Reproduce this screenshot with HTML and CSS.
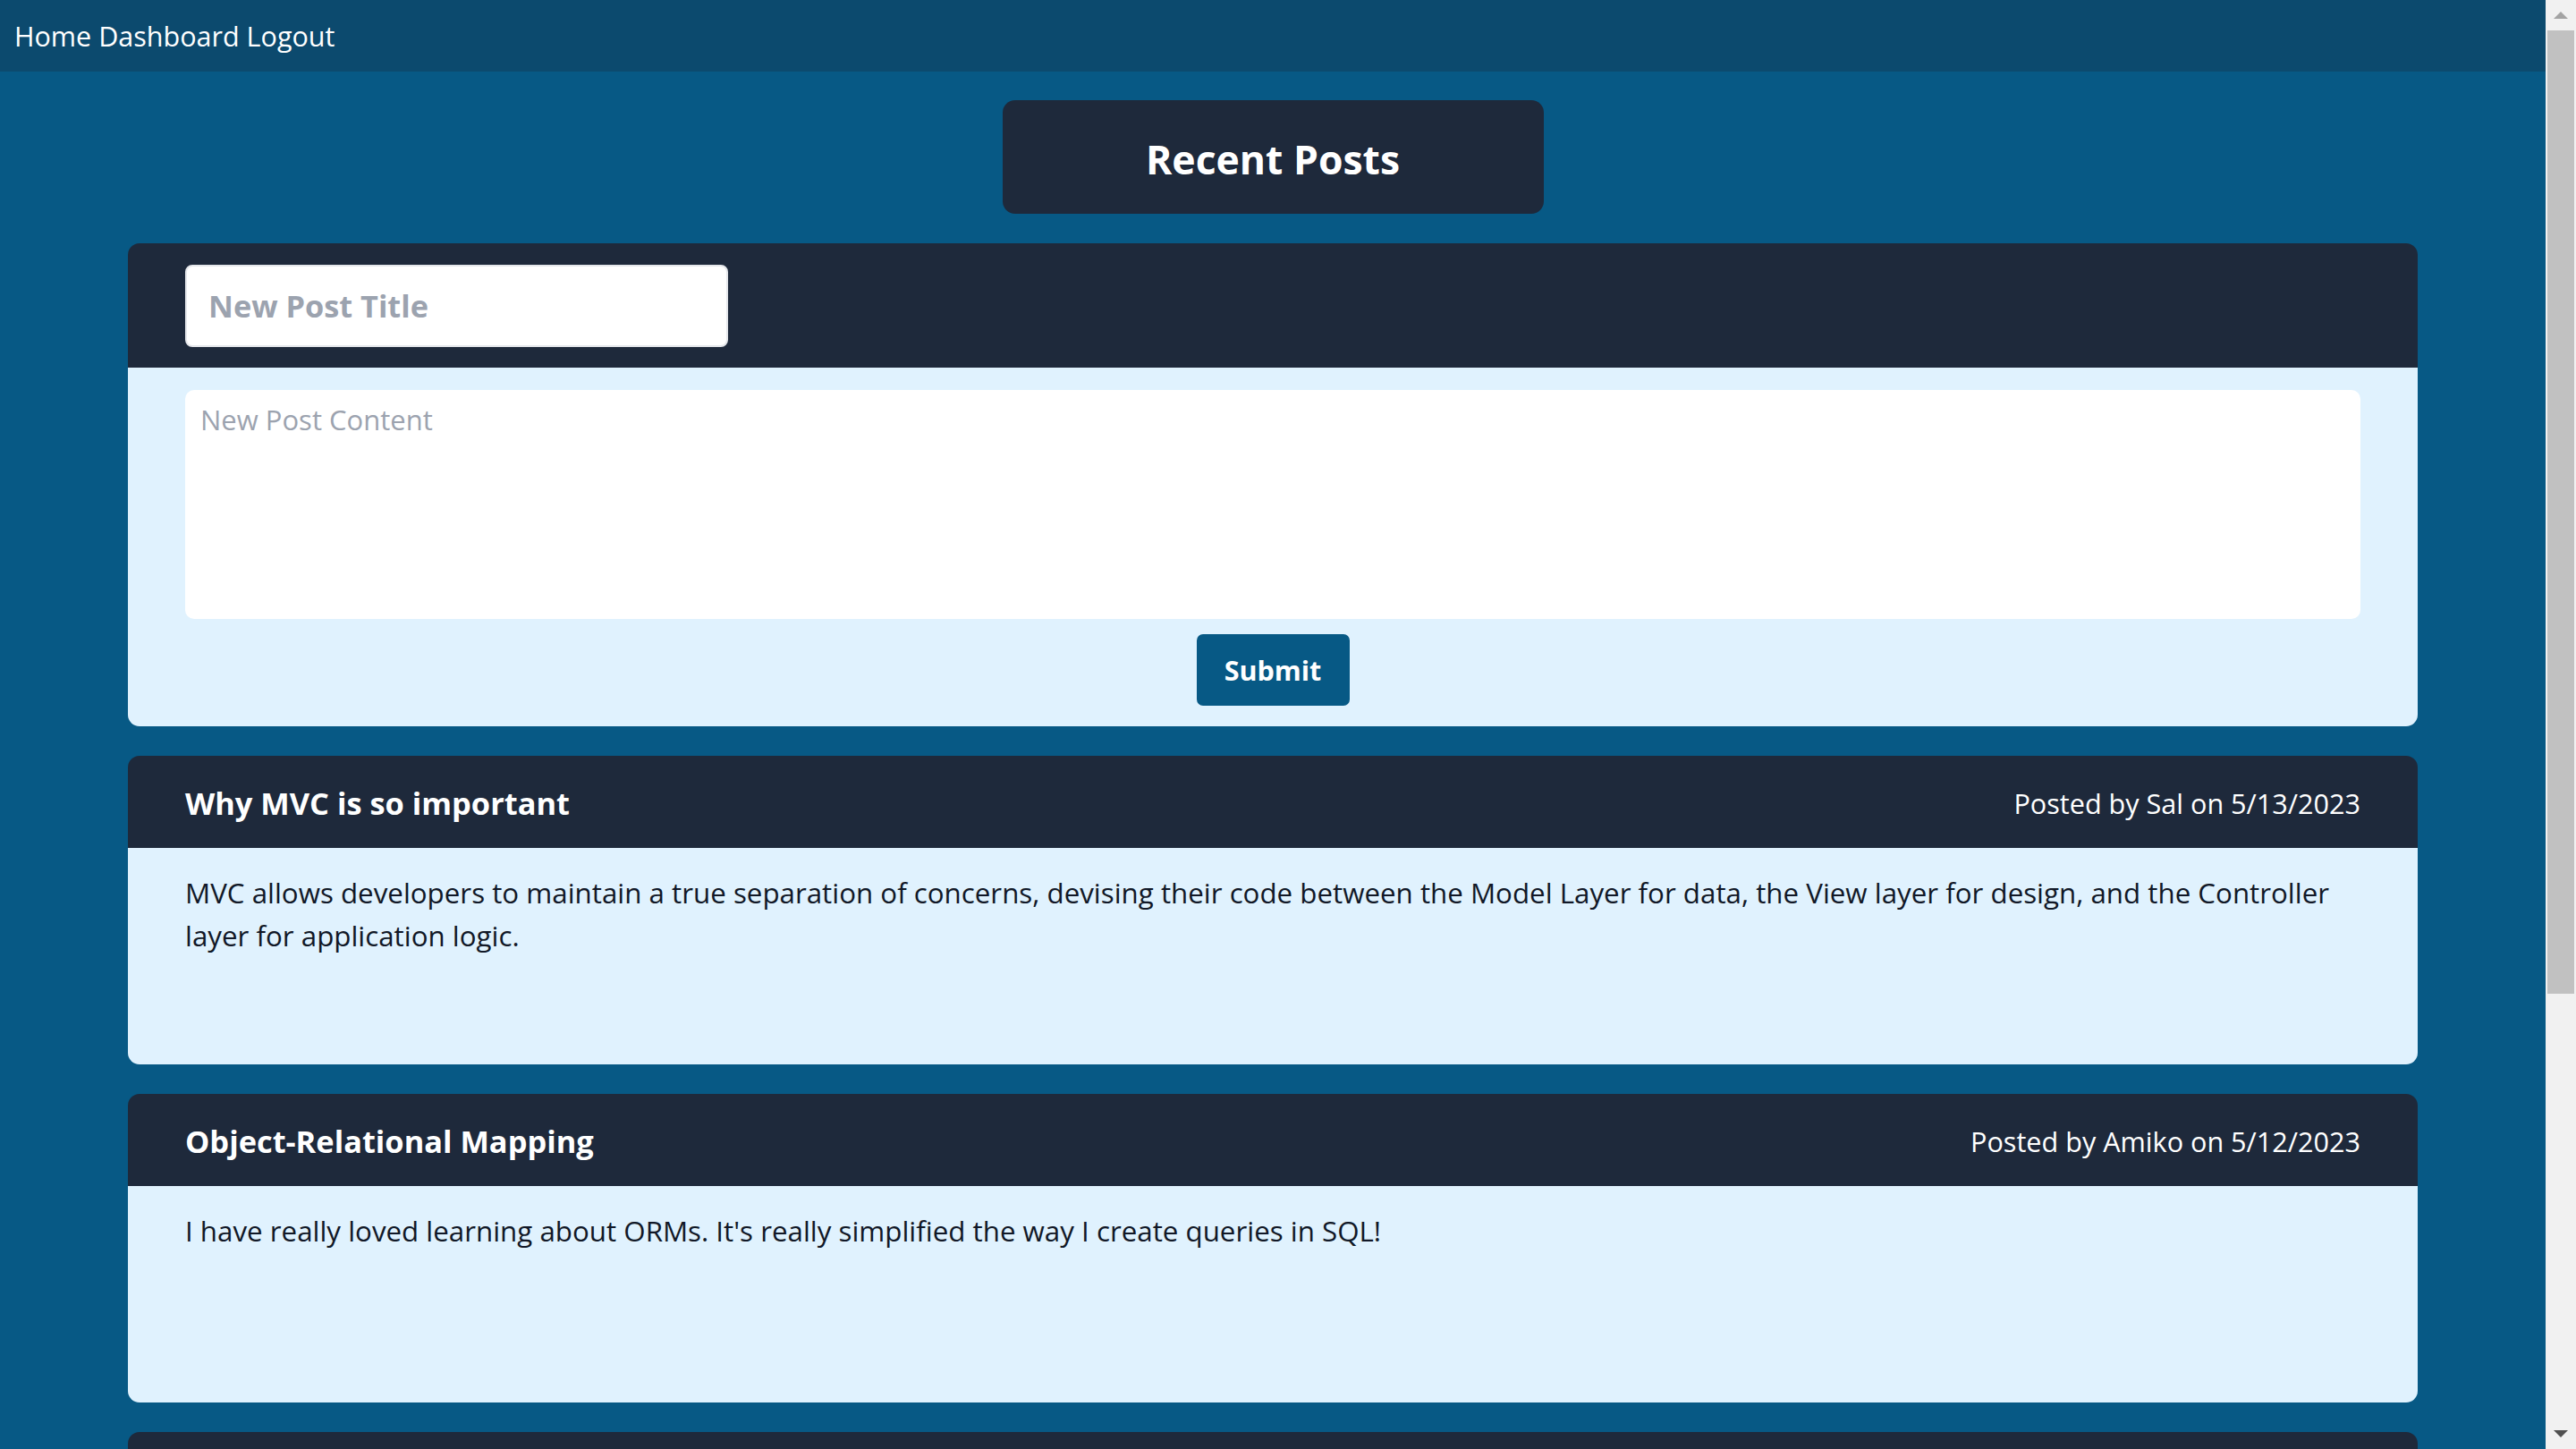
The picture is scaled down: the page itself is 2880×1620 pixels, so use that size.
FILE: index.html
```html
<!DOCTYPE html>
<html lang="en">
<head>
<meta charset="utf-8">
<title>Tech Blog</title>
<link rel="stylesheet" href="styles.css">
</head>
<body>
<div class="page">
  <div class="viewport">
    <nav class="nav">
      <a class="nav-link" href="#">Home</a>
      <a class="nav-link" href="#">Dashboard</a>
      <a class="nav-link" href="#">Logout</a>
    </nav>
    <main class="main">
      <h1 class="page-title">Recent Posts</h1>

      <form class="card">
        <div class="card-head">
          <input class="title-input" type="text" placeholder="New Post Title">
        </div>
        <div class="form-body">
          <textarea class="content-input" placeholder="New Post Content"></textarea>
          <button class="submit-btn" type="button">Submit</button>
        </div>
      </form>

      <article class="card">
        <header class="card-head post-head">
          <h2 class="post-title">Why MVC is so important</h2>
          <span class="post-meta">Posted by Sal on 5/13/2023</span>
        </header>
        <div class="post-body">
          <p class="post-text">MVC allows developers to maintain a true separation of concerns, devising their code between the Model Layer for data, the View layer for design, and the Controller layer for application logic.</p>
        </div>
      </article>

      <article class="card">
        <header class="card-head post-head">
          <h2 class="post-title">Object-Relational Mapping</h2>
          <span class="post-meta">Posted by Amiko on 5/12/2023</span>
        </header>
        <div class="post-body">
          <p class="post-text">I have really loved learning about ORMs. It's really simplified the way I create queries in SQL!</p>
        </div>
      </article>

      <article class="card">
        <div class="card-head post-head"></div>
      </article>
    </main>
  </div>
  <div class="scrollbar" aria-hidden="true">
    <div class="sb-btn">
      <svg class="sb-arrow" width="16" height="8" viewBox="0 0 16 8"><polygon points="0,8 8,0 16,8" fill="#a3a3a3"/></svg>
    </div>
    <div class="sb-track">
      <div class="sb-thumb"></div>
    </div>
    <div class="sb-btn sb-btn-down">
      <svg class="sb-arrow" width="16" height="8" viewBox="0 0 16 8"><polygon points="0,0 16,0 8,8" fill="#505050"/></svg>
    </div>
  </div>
</div>
</body>
</html>
```

FILE: styles.css
```css
html, body {
  margin: 0;
  padding: 0;
  height: 100%;
  overflow: hidden;
}

body {
  font-family: "Open Sans", "Noto Sans", sans-serif;
  background: #075985;
  color: #111827;
}

.page {
  display: flex;
  height: 1620px;
}

.viewport {
  flex: 1;
  min-width: 0;
  overflow: hidden;
  display: flex;
  flex-direction: column;
}

.nav {
  height: 80px;
  flex: none;
  background: #0c4a6e;
  display: flex;
  align-items: center;
  gap: 8px;
  padding-left: 16px;
}

.nav-link {
  color: #ffffff;
  text-decoration: none;
  font-size: 30.5px;
}

.main {
  display: flex;
  flex-direction: column;
  align-items: center;
  gap: 33px;
  padding-top: 32px;
}

.page-title {
  margin: 0;
  width: 605px;
  height: 127px;
  box-sizing: border-box;
  padding-top: 3px;
  background: #1e293b;
  border-radius: 14px;
  color: #ffffff;
  font-size: 44.5px;
  font-weight: 700;
  display: flex;
  align-items: center;
  justify-content: center;
}

.card {
  margin: 0;
  width: 2560px;
  border-radius: 13px;
  overflow: hidden;
  flex: none;
}

.card-head {
  background: #1e293b;
  height: 139px;
  box-sizing: border-box;
  padding: 0 64px;
  display: flex;
  align-items: center;
}

.title-input {
  width: 607px;
  height: 92px;
  box-sizing: border-box;
  border: 2px solid #e5e7eb;
  border-radius: 8px;
  padding: 0 24px;
  font-family: inherit;
  font-size: 34.3px;
  font-weight: 700;
  color: #111827;
  background: #ffffff;
  outline: none;
}

.title-input::placeholder {
  color: #9ca3af;
}

.form-body {
  background: #e0f2fe;
  padding: 25px 64px 23px;
  display: flex;
  flex-direction: column;
  align-items: center;
  gap: 17px;
}

.content-input {
  width: 100%;
  height: 256px;
  box-sizing: border-box;
  border: none;
  border-radius: 10px;
  padding: 9px 17px;
  font-family: inherit;
  font-size: 31px;
  line-height: 48px;
  resize: none;
  background: #ffffff;
  outline: none;
  display: block;
}

.content-input::placeholder {
  color: #9ca3af;
}

.submit-btn {
  width: 171px;
  height: 80px;
  border: none;
  border-radius: 7px;
  background: #075985;
  color: #ffffff;
  font-family: inherit;
  font-size: 30.5px;
  font-weight: 700;
  padding: 0;
}

.post-head {
  height: 103px;
  justify-content: space-between;
}

.post-title {
  margin: 0;
  color: #ffffff;
  font-size: 34.4px;
  font-weight: 700;
  padding-top: 2px;
}

.post-meta {
  color: #ffffff;
  font-size: 30.6px;
  padding-top: 2px;
}

.post-body {
  background: #e0f2fe;
  height: 242px;
  box-sizing: border-box;
  padding: 26px 64px 24px;
}

.post-text {
  margin: 0;
  font-size: 31.3px;
  line-height: 48px;
  color: #111827;
}

.scrollbar {
  width: 34px;
  flex: none;
  background: #f1f1f1;
  display: flex;
  flex-direction: column;
}

.sb-btn {
  height: 34px;
  flex: none;
  display: flex;
  align-items: center;
  justify-content: center;
}

.sb-btn-down {
  margin-top: auto;
}

.sb-arrow {
  display: block;
}

.sb-track {
  flex: 1;
  display: flex;
  flex-direction: column;
}

.sb-thumb {
  margin-left: 2px;
  width: 30px;
  height: 1077px;
  background: #c1c1c1;
}
```
